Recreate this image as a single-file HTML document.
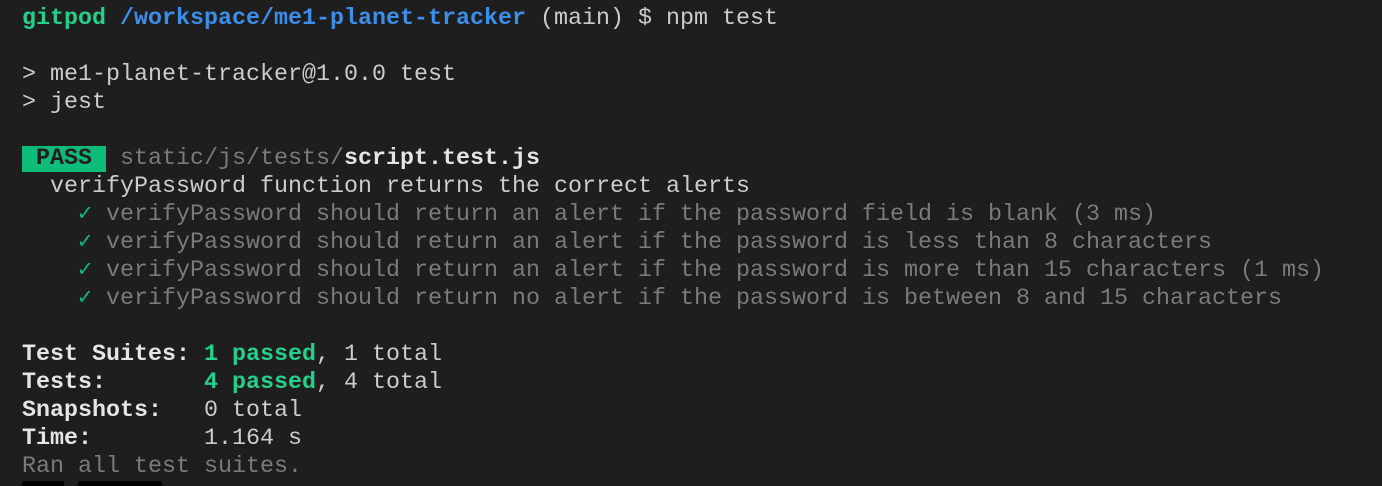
<!DOCTYPE html>
<html><head><meta charset="utf-8"><style>
html,body{margin:0;padding:0;background:#1e1e1e;width:1382px;height:486px;overflow:hidden}
pre{margin:0;position:absolute;left:22px;top:5px;font-family:"Liberation Mono","DejaVu Sans Mono",monospace;font-size:23.33px;line-height:28px;color:#cccccc;white-space:pre}
.g{color:#23d18b;font-weight:bold}.b{color:#3b8eea;font-weight:bold}.d{color:#7a7a7a}.w{color:#e5e5e5;font-weight:bold}
.pass{background:#0dbc79;color:#1e1e1e;font-weight:bold}
.ck{color:#0dbc79}
.blk{position:absolute;top:481px;height:5px;background:#000}
</style></head><body>
<pre><span class="g">gitpod</span> <span class="b">/workspace/me1-planet-tracker</span> (main) $ npm test

&gt; me1-planet-tracker@1.0.0 test
&gt; jest

<span class="pass"> PASS </span> <span class="d">static/js/tests/</span><span class="w">script.test.js</span>
  verifyPassword function returns the correct alerts
    <span class="ck">✓</span><span class="d"> verifyPassword should return an alert if the password field is blank (3 ms)</span>
    <span class="ck">✓</span><span class="d"> verifyPassword should return an alert if the password is less than 8 characters</span>
    <span class="ck">✓</span><span class="d"> verifyPassword should return an alert if the password is more than 15 characters (1 ms)</span>
    <span class="ck">✓</span><span class="d"> verifyPassword should return no alert if the password is between 8 and 15 characters</span>

<span class="w">Test Suites: </span><span class="g">1 passed</span>, 1 total
<span class="w">Tests:       </span><span class="g">4 passed</span>, 4 total
<span class="w">Snapshots:   </span>0 total
<span class="w">Time:        </span>1.164 s
<span class="d">Ran all test suites.</span></pre>
<div class="blk" style="left:22px;width:42px"></div>
<div class="blk" style="left:78px;width:84px"></div>
</body></html>
